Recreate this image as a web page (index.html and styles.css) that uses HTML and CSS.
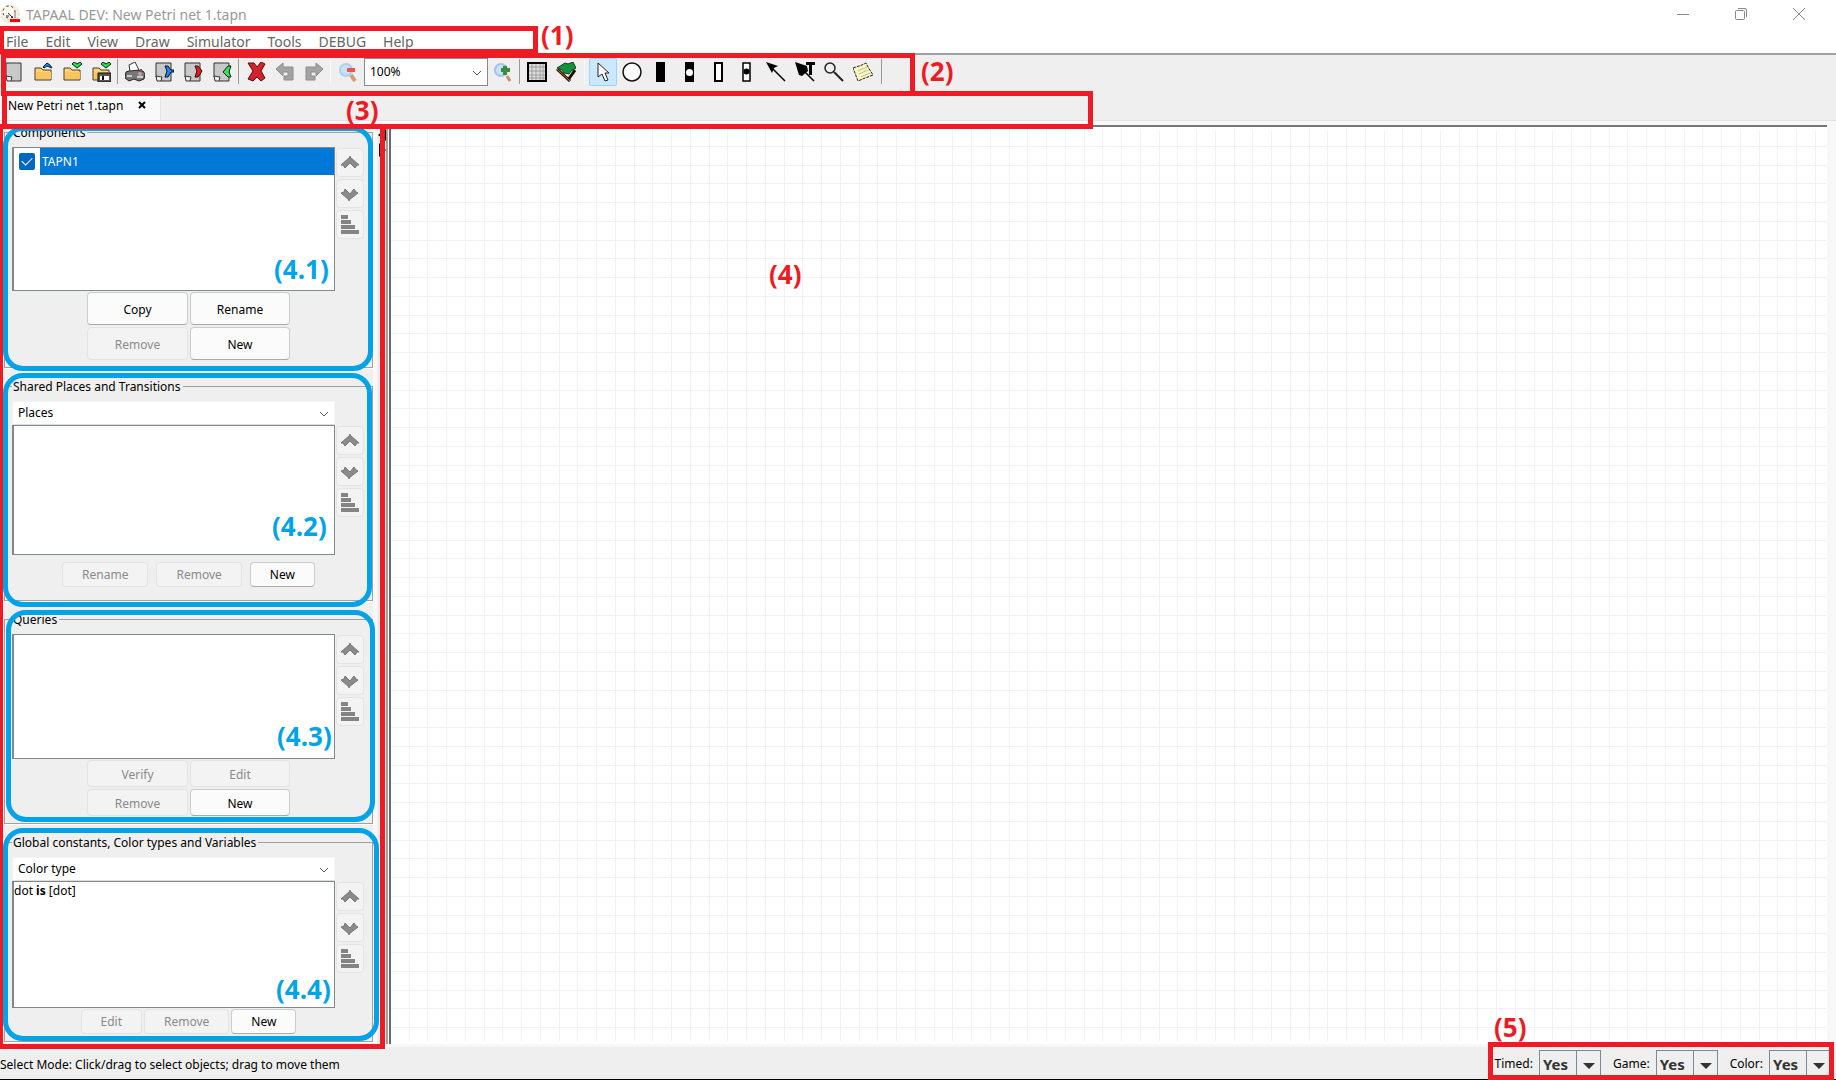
FILE: index.html
```html
<!DOCTYPE html>
<html lang="en">
<head>
<meta charset="utf-8">
<title>TAPAAL DEV: New Petri net 1.tapn</title>
<link rel="stylesheet" href="styles.css">
</head>
<body>
<svg class="defs" width="0" height="0" aria-hidden="true">
  <symbol id="up" viewBox="0 0 20 20"><path d="M10 3v1l9 8h-2l-2 3-5-5-5 5-2-3H1l9-8z" fill="#8a8a8a" stroke="#777"/></symbol>
  <symbol id="down" viewBox="0 0 20 20"><path d="M9 17v-1L1 9l3-1 1-3 5 5 4-5 2 3 2 1-9 7z" fill="#8a8a8a" stroke="#777"/></symbol>
  <symbol id="sort" viewBox="0 0 20 20"><path d="M1 0h7v4H1zM1 5h10v4H1zM1 10h14v4H1zM1 15h18v4H1z" fill="#848484"/></symbol>
  <symbol id="page" viewBox="0 0 20 20"><path d="M2 1h15v18H7l-5-4z" fill="#c9c9c9" stroke="#333"/><path d="M2 14l6 1-1 4H3z" fill="#eee" stroke="#333"/></symbol>
  <symbol id="folder" viewBox="0 0 20 20"><path d="M2 18V6h6l2 2h8v10z" fill="#fbd478" stroke="#4a3a20"/><path d="M3 17l1-7h14v7z" fill="#fbc55e"/></symbol>
  <symbol id="chev" viewBox="0 0 10 6"><path d="M1 1l4 4 4-4" fill="none" stroke="#555"/></symbol>
</svg>

<header class="titlebar">
  <svg class="logo" width="20" height="20" viewBox="0 0 20 20"><circle cx="9" cy="10" r="9" fill="#f8efdc" stroke="#e8dcc0" stroke-dasharray="2 1"/><circle cx="8" cy="8" r="6" fill="#fffdf5" stroke="#222" stroke-width="1" stroke-dasharray="2 3"/><path d="M7 9l5 5M5 12l3 0" stroke="#222"/><path d="M9 15h10v3H9z" fill="#f00"/><path d="M14 8v6" stroke="#caa" stroke-width="2"/></svg>
  <h1>TAPAAL DEV: New Petri net 1.tapn</h1>
  <div class="window-controls">
    <button aria-label="Minimize"><svg width="14" height="14"><path d="M1 7.5h12" stroke="#888"/></svg></button>
    <button aria-label="Restore"><svg width="14" height="14" fill="none" stroke="#888"><rect x="1.500" y="3.500" width="9" height="9" rx="1"/><path d="M4 1.500h7q1.500 0 1.500 1.500v7"/></svg></button>
    <button aria-label="Close"><svg width="14" height="14"><path d="M1 1l12 12M13 1L1 13" stroke="#888"/></svg></button>
  </div>
</header>

<nav class="menubar">
  <button>File</button><button>Edit</button><button>View</button><button>Draw</button><button>Simulator</button><button>Tools</button><button>DEBUG</button><button>Help</button>
</nav>

<div class="toolbar">
  <div class="tools">
    <button aria-label="New"><svg><use href="#page"/></svg></button>
    <button aria-label="Open"><svg viewBox="0 0 20 20"><use href="#folder"/><path d="M10 5l4-4 3 2 2 3-5-2-3 2z" fill="#2a8cff" stroke="#012"/></svg></button>
    <button aria-label="Save"><svg viewBox="0 0 20 20"><use href="#folder"/><path d="M10 2l2-2 3 2 3-2 2 2-5 4z" fill="#2be04a" stroke="#021"/></svg></button>
    <button aria-label="Save as"><svg viewBox="0 0 20 20"><use href="#folder"/><path d="M10 2l2-2 3 2 3-2 2 2-5 4z" fill="#2be04a" stroke="#021"/><path d="M7 11h13v9H7z" fill="#555" stroke="#111"/><path d="M9 14h9v4H9z" fill="#fff"/><path d="M11 14h2v4h-2z" fill="#111"/></svg></button>
  </div>
  <span class="sep"></span>
  <div class="tools">
    <button aria-label="Print"><svg viewBox="0 0 20 20"><path d="M1 10l6-2 11 1 2 3-1 5-5 2-5-2-5 2-4-3z" fill="#777" stroke="#222"/><path d="M5 9L4 3l6-3 4 8z" fill="#fff" stroke="#333"/><path d="M2 14h5M12 15h6" stroke="#ccc" stroke-width="2"/><path d="M15 8h2" stroke="#c33" stroke-width="2"/><circle cx="15" cy="12" r="2" fill="#aaa"/></svg></button>
    <button aria-label="Export"><svg viewBox="0 0 20 20"><use href="#page"/><path d="M11 4h3l3 4h3v2h-3l-3 5h-3l2-6z" fill="#1d86f2" stroke="#012"/></svg></button>
    <button aria-label="Export PDF"><svg viewBox="0 0 20 20"><use href="#page"/><path d="M12 4h3l4 5-4 6h-3l2-6z" fill="#e02222" stroke="#300"/></svg></button>
    <button aria-label="Import"><svg viewBox="0 0 20 20"><use href="#page"/><path d="M19 4h-3l-5 6 5 5h3l-2-5z" fill="#3ee05a" stroke="#021"/></svg></button>
  </div>
  <span class="sep"></span>
  <div class="tools">
    <button aria-label="Delete"><svg viewBox="0 0 20 20"><path d="M2 1h6l3 4 4-5 4 2-4 7 4 7-4 3-4-4-4 4-5-2 5-8z" fill="#d5232e" stroke="#5a0a10"/></svg></button>
    <button aria-label="Undo"><svg viewBox="0 0 20 20"><path d="M1 7l7-6v4h10v13H9v-4h4v-4H8v4z" fill="#a3a3a3" stroke="#8c8c8c"/></svg></button>
    <button aria-label="Redo"><svg viewBox="0 0 20 20"><path d="M19 7l-7-6v4H2v13h9v-4H7v-4h5v4z" fill="#a3a3a3" stroke="#8c8c8c"/></svg></button>
  </div>
  <span class="sep faint"></span>
  <button aria-label="Zoom out"><svg viewBox="0 0 20 20"><path d="M13 13l4 6" stroke="#d0a070" stroke-width="4"/><circle cx="8" cy="8" r="6" fill="#c8e2fa" stroke="#b0cdea" stroke-width="2"/><path d="M9 8h8" stroke="#f0524e" stroke-width="4"/></svg></button>
  <div class="zoom select"><select aria-label="Zoom"><option>100%</option></select><svg class="chev"><use href="#chev"/></svg></div>
  <button aria-label="Zoom in"><svg viewBox="0 0 20 20"><path d="M14 14l3 5" stroke="#c89060" stroke-width="3"/><circle cx="8" cy="8" r="6" fill="#c8e2fa" stroke="#a0c4ea" stroke-width="2"/><path d="M12 4v9M8 8h9" stroke="#3d8a3d" stroke-width="4"/></svg></button>
  <span class="sep"></span>
  <div class="tools">
    <button aria-label="Toggle grid"><svg viewBox="0 0 20 20"><path d="M1 1h18v18H1z" fill="#ddd" stroke="#000" stroke-width="2"/><path d="M5 2v16M9 2v16M13 2v16M16 2v16M2 5h16M2 9h16M2 13h16M2 16h16" stroke="#888" stroke-width=".7"/></svg></button>
    <button aria-label="Animation mode"><svg viewBox="0 0 20 20"><path d="M1 7l13 12M19 8l-7 10" stroke="#210" stroke-width="3"/><path d="M1 7l13 12" stroke="#c07818"/><path d="M1 6l8-5 3 1 5-2 3 6-5 3-2 3-5-1-2-3z" fill="#17923a" stroke="#043"/></svg></button>
  </div>
  <span class="sep faint wide"></span>
  <div class="tools draw">
    <button class="active" aria-label="Select"><svg viewBox="0 0 20 20"><path d="M5 1v14l4-3 3 7 3-1-3-7h4z" fill="#fff" stroke="#222"/></svg></button>
    <button aria-label="Place"><svg viewBox="0 0 20 20"><circle cx="10" cy="10" r="9" fill="#fff" stroke="#111" stroke-width="1.500"/></svg></button>
    <button aria-label="Transition"><svg viewBox="0 0 20 20"><path d="M5 0h9v20H5z"/></svg></button>
    <button aria-label="Urgent transition"><svg viewBox="0 0 20 20"><path d="M5 0h9v20H5z"/><circle cx="9.500" cy="10.500" r="3.500" fill="#fff"/></svg></button>
    <button aria-label="Uncontrollable transition"><svg viewBox="0 0 20 20"><path d="M6 1h7v18H6z" fill="#fff" stroke="#000" stroke-width="2"/></svg></button>
    <button aria-label="Uncontrollable urgent transition"><svg viewBox="0 0 20 20"><path d="M6 1h7v18H6z" fill="#fff" stroke="#000" stroke-width="1.500"/><circle cx="9.500" cy="9.500" r="3"/></svg></button>
    <button aria-label="Arc"><svg viewBox="0 0 20 20"><path d="M0 0l12 4-4 2-2 5z"/><path d="M5 5l14 14" stroke="#000" stroke-width="1.500"/></svg></button>
    <button aria-label="Transport arc"><svg viewBox="0 0 20 20"><path d="M0 0l12 4 1 5-6 5-3-1z"/><path d="M5 5l14 14" stroke="#000" stroke-width="1.500"/><path d="M11 0h9v3h-3v10h-3V3h-3z"/></svg></button>
    <button aria-label="Inhibitor arc"><svg viewBox="0 0 20 20"><circle cx="6" cy="6" r="5" fill="none" stroke="#222" stroke-width="1.500"/><path d="M10 10l9 9" stroke="#222" stroke-width="2"/></svg></button>
    <button aria-label="Annotation"><svg viewBox="0 0 20 20"><path d="M0 6l9-3 4-2 2 4 5 8-8 3-7 3z" fill="#fbf7c0" stroke="#222" stroke-dasharray="3 1"/><path d="M5 9l9-4M6 12l9-4M8 15l9-4" stroke="#bb9"/></svg></button>
  </div>
  <span class="sep last"></span>
</div>

<main class="workspace">
  <div class="tabs">
    <button class="tab">New Petri net 1.tapn</button>
    <button class="tab-close" aria-label="Close tab"><svg width="8" height="8"><path d="M1 1l6 6M7 1L1 7" stroke="#000" stroke-width="2"/></svg></button>
  </div>
  <div class="split">
    <aside class="sidebar">
      <fieldset>
        <legend>Components</legend>
        <div class="editor">
          <div class="list tall"><label class="row"><input type="checkbox" checked><span>TAPN1</span></label></div>
          <div class="order"><button disabled aria-label="Move up"><svg><use href="#up"/></svg></button><button disabled aria-label="Move down"><svg><use href="#down"/></svg></button><button disabled aria-label="Sort"><svg><use href="#sort"/></svg></button></div>
        </div>
        <div class="actions pair large"><button>Copy</button><button>Rename</button><button disabled>Remove</button><button>New</button></div>
      </fieldset>
      <fieldset>
        <legend>Shared Places and Transitions</legend>
        <div class="select kind"><select aria-label="Shared kind"><option>Places</option></select><svg class="chev"><use href="#chev"/></svg></div>
        <div class="editor">
          <div class="list"></div>
          <div class="order"><button disabled aria-label="Move up"><svg><use href="#up"/></svg></button><button disabled aria-label="Move down"><svg><use href="#down"/></svg></button><button disabled aria-label="Sort"><svg><use href="#sort"/></svg></button></div>
        </div>
        <div class="actions line spaced"><button disabled>Rename</button><button disabled>Remove</button><button>New</button></div>
      </fieldset>
      <fieldset>
        <legend>Queries</legend>
        <div class="editor">
          <div class="list short"></div>
          <div class="order"><button disabled aria-label="Move up"><svg><use href="#up"/></svg></button><button disabled aria-label="Move down"><svg><use href="#down"/></svg></button><button disabled aria-label="Sort"><svg><use href="#sort"/></svg></button></div>
        </div>
        <div class="actions pair"><button disabled>Verify</button><button disabled>Edit</button><button disabled>Remove</button><button>New</button></div>
      </fieldset>
      <fieldset>
        <legend>Global constants, Color types and Variables</legend>
        <div class="select kind"><select aria-label="Declaration kind"><option>Color type</option></select><svg class="chev"><use href="#chev"/></svg></div>
        <div class="editor">
          <div class="list medium"><p>dot<b> is</b> [dot]</p></div>
          <div class="order"><button disabled aria-label="Move up"><svg><use href="#up"/></svg></button><button disabled aria-label="Move down"><svg><use href="#down"/></svg></button><button disabled aria-label="Sort"><svg><use href="#sort"/></svg></button></div>
        </div>
        <div class="actions line"><button disabled>Edit</button><button disabled>Remove</button><button>New</button></div>
      </fieldset>
    </aside>
    <div class="divider"><svg width="10" height="34"><path d="M9 5v12L1 11zM2 19v14l7-7z"/></svg></div>
    <section class="canvas" aria-label="Drawing surface"><div class="grid"></div></section>
  </div>
</main>

<footer class="statusbar">
  <p>Select Mode: Click/drag to select objects; drag to move them</p>
  <div class="lens"><label for="timed">Timed:</label><div class="flag"><select id="timed"><option>Yes</option></select></div></div>
  <div class="lens"><label for="game">Game:</label><div class="flag"><select id="game"><option>Yes</option></select></div></div>
  <div class="lens"><label for="color">Color:</label><div class="flag"><select id="color"><option>Yes</option></select></div></div>
</footer>

<div class="marks">
  <div class="box sky components"></div>
  <div class="box sky shared"></div>
  <div class="box sky queries"></div>
  <div class="box sky globals"></div>
  <div class="box panel"></div>
  <div class="box menu"></div>
  <div class="box tool"></div>
  <div class="box tabrow"></div>
  <div class="box state"></div>
  <span class="tag t1">(1)</span>
  <span class="tag t2">(2)</span>
  <span class="tag t3">(3)</span>
  <span class="tag t4">(4)</span>
  <span class="tag t5">(5)</span>
  <span class="tag sky t41">(4.1)</span>
  <span class="tag sky t42">(4.2)</span>
  <span class="tag sky t43">(4.3)</span>
  <span class="tag sky t44">(4.4)</span>
</div>
</body>
</html>
```
FILE: styles.css
```css
* { box-sizing: border-box; }

body {
  position: relative;
  display: flex;
  flex-direction: column;
  min-height: 100vh;
  margin: 0;
  overflow: hidden;
  background: #efefef;
  color: #000;
  font: 12px/16px "Noto Sans", "Open Sans", sans-serif;
}

button, select, input { margin: 0; font: inherit; color: inherit; }
button { padding: 0; border: 0; background: none; }
p, h1 { margin: 0; }
svg { display: block; flex: none; }
.defs { position: absolute; }

/* Title bar */
.titlebar { display: flex; align-items: center; height: 28px; padding: 0 17px 0 1px; background: #fff; }
.titlebar h1 { flex: 1; margin-left: 5px; padding-top: 2px; color: #999; font-size: 14px; font-weight: 400; line-height: 20px; }
.window-controls { display: flex; gap: 2px; }
.window-controls button { display: grid; place-items: center; width: 56px; height: 28px; }
.window-controls button:last-child { margin-right: -8px; }

/* Menu */
.menubar { display: flex; align-items: center; gap: 17px; height: 25px; padding: 2px 6px 0; background: #fff; color: #666; font-size: 14px; line-height: 20px; }

/* Toolbar */
.toolbar { display: flex; align-items: center; height: 35px; margin-left: -1px; border-top: 2px solid #a0a0a0; }
.toolbar button { display: grid; flex: none; place-items: center; width: 29px; height: 28px; }
.toolbar button svg { width: 20px; height: 20px; }
.tools { display: flex; }
.tools.draw { justify-content: space-between; width: 288px; }
.tools.draw button { width: 28px; }
.toolbar .active { border: 1px solid #99d1ff; border-radius: 2px; background: #cce8ff; }
.sep { align-self: center; width: 1px; height: 25px; margin: 0 2px; background: #999; }
.sep.faint { background: #f8f8f8; }
.sep.wide { margin: 0 4px; }
.sep.last { margin-left: 4px; }
.select { position: relative; display: flex; background: #fff; }
.select select { width: 100%; padding: 0 5px; border: 0; background: none; appearance: none; }
.chev { position: absolute; top: 50%; right: 5px; width: 10px; height: 6px; margin-top: -2px; }
.zoom { width: 124px; height: 28px; margin: 0 0 0 2px; border: 1px solid #888; }

/* Tabs */
.workspace { display: flex; flex: 1; flex-direction: column; }
.tabs { display: flex; align-items: center; height: 33px; border-bottom: 1px solid #e3e3e3; }
.tab, .tab-close { display: grid; align-items: center; height: 32px; padding-top: 4px; background: #f9f9f9; }
.tab { padding-left: 8px; }
.tab-close { width: 38px; padding: 2px 0 0 15px; border-right: 1px solid #e3e3e3; }

/* Split view */
.split { display: flex; flex: 1; padding: 3px 9px 3px 0; background: #f8f8f8; }
.sidebar { display: flex; flex: none; flex-direction: column; gap: 10px; width: 373px; padding-left: 4px; background: #efefef; }
.divider { flex: none; width: 12px; margin-left: 4px; background: linear-gradient(90deg, #efefef 9px, #a0a0a0 9px 11px, #fff 11px); }
.canvas { flex: 1; margin-top: 1px; padding: 3px 1px 3px 0; border-top: 2px solid #777; border-left: 2px solid #696969; background: #fff; }
.grid {
  height: 100%;
  background-image:
    linear-gradient(90deg, transparent 18px, #f0f0ff 18px 19px, transparent 19px 36px, #f0f0ff 36px 37px, transparent 37px 55px, #f0f0ff 55px 56px, transparent 56px 74px, #f0f0ff 74px),
    linear-gradient(transparent 16px, #f0f0ff 16px 17px, transparent 17px 35px, #f0f0ff 35px 36px, transparent 36px 53px, #f0f0ff 53px 54px, transparent 54px 72px, #f0f0ff 72px 73px, transparent 73px);
  background-size: 75px 75px;
}

/* Side panel groups */
fieldset { min-width: 0; margin: 0; padding: 7px; border: 1px solid #a0a0a0; box-shadow: 1px 1px 0 #fff; }
legend { padding: 2px 2px 0 1px; line-height: 14px; }
.kind { width: 323px; height: 24px; border: 1px solid #f4f4f4; border-bottom-color: #ddd; }
.editor { display: grid; grid-template-columns: 323px 28px; gap: 1px; }
.list { height: 130px; border: 1px solid #828790; border-width: 1px 1px 1px 2px; background: #fff; }
.list.tall { height: 144px; }
.list.medium { height: 127px; }
.list.short { height: 125px; }
.list p { padding-top: 1px; }
.row { display: flex; align-items: center; height: 27px; padding-left: 5px; }
.row input { width: 16px; height: 17px; margin-right: 5px; border-radius: 2px; appearance: none; background: #0067c0; }
.row input::after { display: block; width: 9px; height: 5px; margin: 4px 0 0 3px; border: solid #fff; border-width: 0 0 1px 1px; content: ""; transform: rotate(-45deg); }
.row span { flex: 1; padding-left: 2px; background: #0078d7; color: #fff; line-height: 27px; }
.order { display: grid; align-content: start; gap: 2px; padding-top: 1px; }
.order button, .actions button { display: grid; place-items: center; border: 1px solid #ccc; border-bottom-color: #aaa; border-radius: 4px; background: #fbfbfb; }
.order button { height: 29px; }
.order svg { width: 20px; height: 20px; }
.order button:disabled, .actions button:disabled { border-color: #e3e3e3; background: #f3f3f3; color: #8a8a8a; }
.actions { display: flex; justify-content: center; gap: 2px; margin-top: 1px; }
.actions.pair { display: grid; grid-template-columns: 101px 100px; }
.actions button { height: 27px; padding-top: 2px; }
.actions.large button { height: 33px; }
.actions.line button { height: 25px; padding: 1px 19px 0; }
.actions.spaced { gap: 8px; margin: 7px 0 6px; }

/* Status bar */
.statusbar { display: flex; align-items: center; height: 33px; padding: 2px 5px 0 0; border-bottom: 1px solid #000; }
.statusbar p { flex: 1; padding-top: 1px; }
.lens { display: flex; align-items: center; gap: 6px; margin-left: 12px; }
.flag { position: relative; width: 62px; height: 29px; border: 1px solid #7a8a99; background: linear-gradient(90deg, transparent 36px, #7a8a99 36px 37px, transparent 37px); }
.flag select { width: 100%; height: 100%; padding: 0 0 0 3px; border: 0; background: none; color: #333; font-size: 15px; font-weight: 700; line-height: 20px; appearance: none; }
.flag::after { position: absolute; top: 12px; right: 5px; border: 6px solid transparent; border-top-color: #333; content: ""; pointer-events: none; }

/* Call-out boxes drawn over the window */
.marks { position: absolute; inset: 0; overflow: hidden; pointer-events: none; }
.box { position: absolute; border: 5px solid #ed1c24; }
.box.sky { border-color: #00a2e8; border-radius: 20px; }
.box.menu { top: 26px; left: -1px; width: 539px; height: 28px; }
.box.tool { top: 53px; left: 1px; width: 914px; height: 43px; }
.box.tabrow { top: 91px; left: 2px; width: 1091px; height: 38px; }
.box.panel { top: 124px; bottom: 31px; left: -2px; width: 387px; }
.box.state { right: 2px; bottom: 0; width: 346px; height: 38px; }
.box.components { top: 126px; left: 3px; width: 370px; height: 245px; }
.box.shared { top: 373px; left: 3px; width: 369px; height: 234px; }
.box.queries { top: 610px; left: 6px; width: 369px; height: 212px; }
.box.globals { top: 828px; left: 3px; width: 376px; height: 213px; }
.tag { position: absolute; color: #ed1c24; font: 700 26px/30px "Open Sans", sans-serif; }
.tag.sky { color: #00a2e8; }
.t1 { top: 20px; left: 541px; }
.t2 { top: 56px; left: 921px; }
.t3 { top: 95px; left: 346px; }
.t4 { top: 259px; left: 769px; }
.t5 { top: 1012px; left: 1494px; }
.t41 { top: 254px; left: 274px; }
.t42 { top: 511px; left: 272px; }
.t43 { top: 721px; left: 277px; }
.t44 { top: 974px; left: 276px; }
```
